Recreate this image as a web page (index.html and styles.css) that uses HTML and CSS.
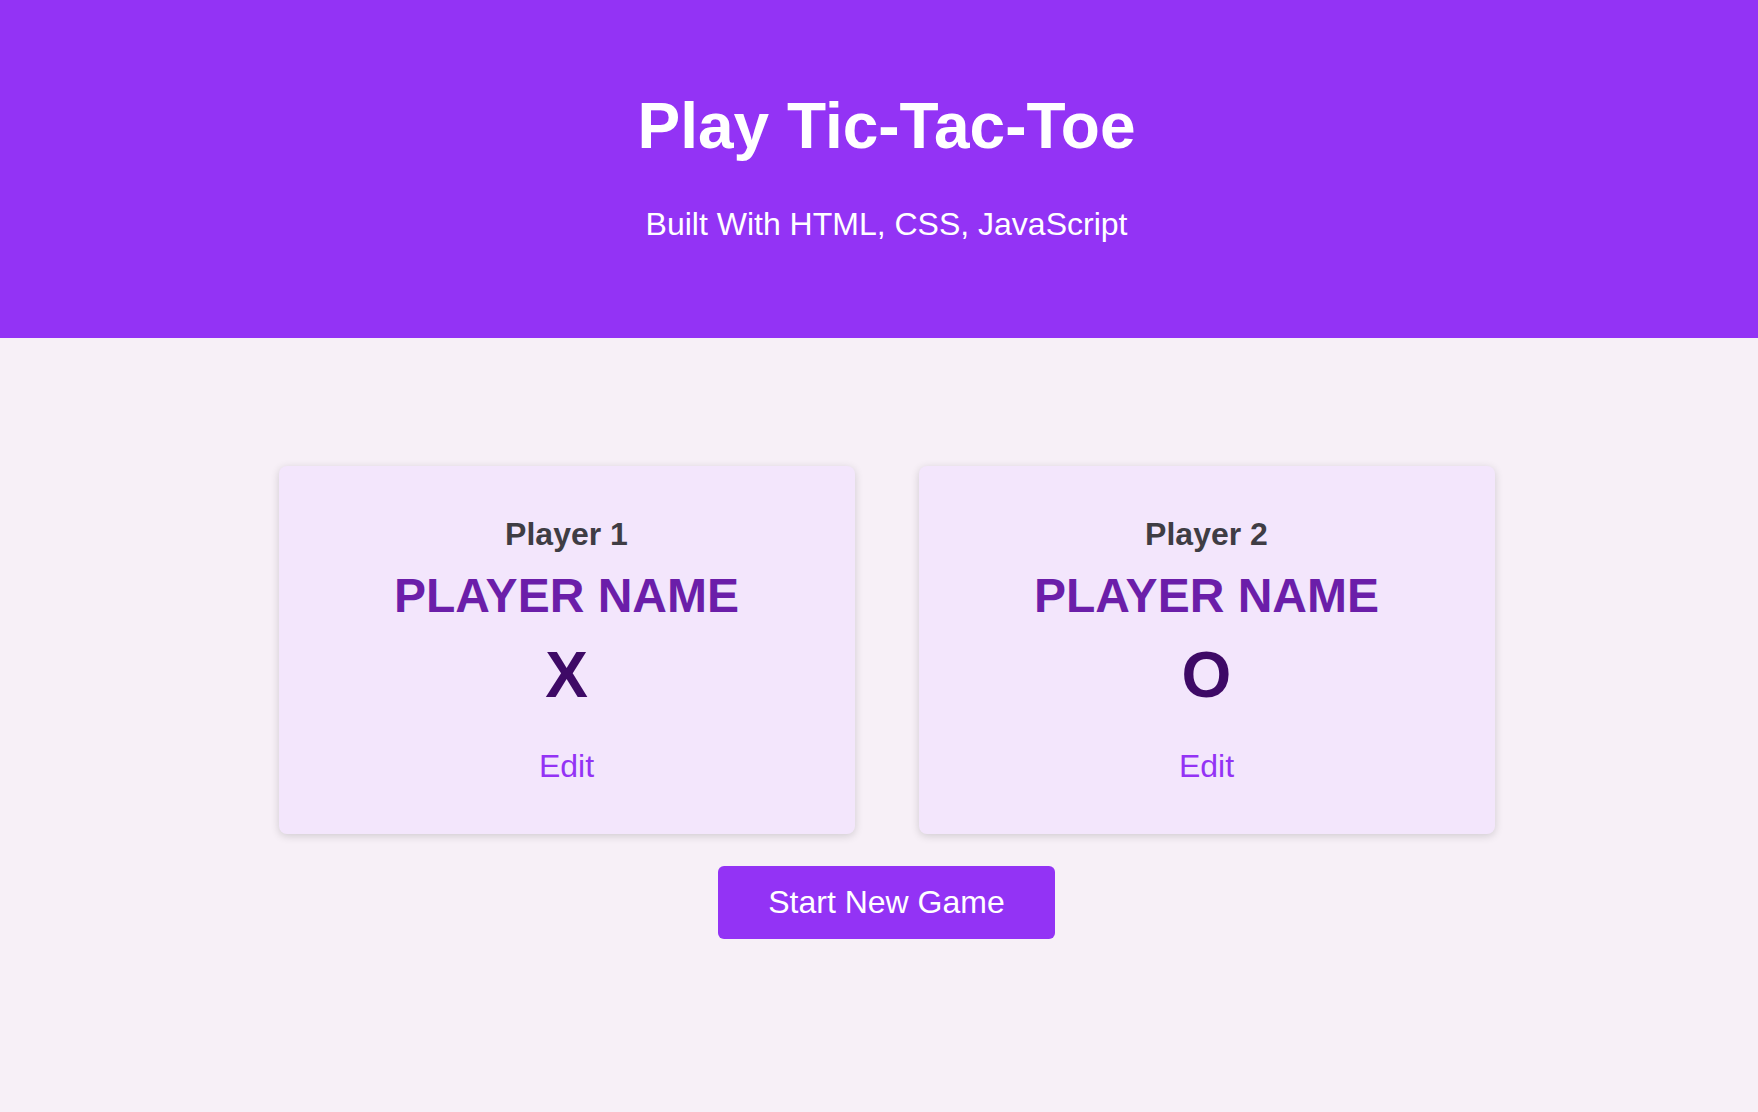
FILE: index.html
```html
<!DOCTYPE html>
<html lang="en">
<head>
<meta charset="utf-8">
<title>Play Tic-Tac-Toe</title>
<link rel="stylesheet" href="styles.css">
</head>
<body>
<header class="site-header">
  <h1 class="site-title">Play Tic-Tac-Toe</h1>
  <p class="site-subtitle">Built With HTML, CSS, JavaScript</p>
</header>
<main class="game-config">
  <ol class="players">
    <li class="player-card">
      <h2 class="player-label">Player 1</h2>
      <h3 class="player-name">PLAYER NAME</h3>
      <p class="player-symbol">X</p>
      <button class="edit-btn" type="button">Edit</button>
    </li>
    <li class="player-card">
      <h2 class="player-label">Player 2</h2>
      <h3 class="player-name">PLAYER NAME</h3>
      <p class="player-symbol">O</p>
      <button class="edit-btn" type="button">Edit</button>
    </li>
  </ol>
  <button class="start-btn" type="button">Start New Game</button>
</main>
</body>
</html>
```
FILE: styles.css
```css
* {
  box-sizing: border-box;
}

html, body {
  margin: 0;
  padding: 0;
}

body {
  background: #f7f0f7;
  font-family: "Liberation Sans", Arial, Helvetica, sans-serif;
  line-height: 1.15;
  color: #3f3d44;
  min-height: 100vh;
}

.site-header {
  background: #9333f5;
  color: #ffffff;
  text-align: center;
  padding: 90px 0 96px 15px;
}

.site-title {
  margin: 0;
  font-size: 64px;
  font-weight: 700;
  line-height: 1.15;
}

.site-subtitle {
  margin: 42px 0 0;
  font-size: 32px;
  font-weight: 400;
  line-height: 1.15;
}

.game-config {
  display: flex;
  flex-direction: column;
  align-items: center;
  padding: 128px 0 0 15px;
}

.players {
  list-style: none;
  margin: 0;
  padding: 0;
  display: grid;
  grid-template-columns: repeat(2, 576px);
  gap: 64px;
}

.player-card {
  background: #f3e6fc;
  border-radius: 8px;
  box-shadow: 0 2px 8px rgba(0, 0, 0, 0.16);
  padding: 50px 16px 49px;
  display: flex;
  flex-direction: column;
  align-items: center;
  text-align: center;
}

.player-label {
  margin: 0;
  font-size: 32px;
  font-weight: 700;
  color: #3f3d44;
}

.player-name {
  margin: 15px 0 0;
  font-size: 48px;
  font-weight: 700;
  color: #6b1ea9;
}

.player-symbol {
  margin: 16px 0 0;
  font-size: 64px;
  font-weight: 700;
  color: #3e0a66;
}

.edit-btn {
  margin: 35px 0 0;
  padding: 0;
  border: none;
  background: transparent;
  font-family: inherit;
  font-size: 32px;
  line-height: 1.15;
  color: #9333f5;
  cursor: pointer;
}

.start-btn {
  margin-top: 32px;
  padding: 18px 50px;
  border: none;
  border-radius: 6px;
  background: #9333f5;
  color: #ffffff;
  font-family: inherit;
  font-size: 32px;
  line-height: 1.15;
  cursor: pointer;
}
```
